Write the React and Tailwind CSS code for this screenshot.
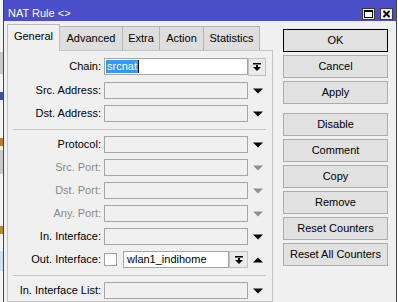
import React from 'react';

const font = { fontFamily: '"Liberation Sans", Arial, sans-serif' };

const Arrow = ({ up = false, gray = false }) => (
  <svg width="10" height="6" viewBox="0 0 10 6" className="ml-[5px] shrink-0">
    <polygon
      points={up ? '0,5.5 10,5.5 5,0.5' : '0,0.5 10,0.5 5,5.5'}
      fill={gray ? '#8f8f8f' : '#000'}
    />
  </svg>
);

const DropIcon = () => (
  <svg width="8" height="8" viewBox="0 0 8 8">
    <rect x="0" y="0" width="8" height="1.5" fill="#000" />
    <rect x="3" y="2" width="2" height="2" fill="#000" />
    <polygon points="0,4 8,4 4,8" fill="#000" />
  </svg>
);

const Label = ({ text, disabled }) => (
  <div
    className={`w-[93px] shrink-0 text-right text-[11px] leading-[13px] ${
      disabled ? 'text-[#8a8a8a]' : 'text-black'
    }`}
  >
    {text}
  </div>
);

const Field = ({ label, disabled = false }) => (
  <div className="flex items-center h-[17px]">
    <Label text={label} disabled={disabled} />
    <div className="ml-[3px] w-[144px] h-[17px] border border-[#a5a5a5] bg-[#f0f0f0]" />
    <Arrow gray={disabled} />
  </div>
);

const Separator = () => <div className="h-px mt-[1px] ml-[5px] mr-[6px] bg-[#c6c6c6]" />;

const Btn = ({ children, primary = false, className = '' }) => (
  <div
    className={`h-[23px] w-[105px] flex items-center justify-center text-[11px] text-black bg-[#e1e1e1] border ${
      primary ? 'border-black' : 'border-[#adadad]'
    } ${className}`}
  >
    {children}
  </div>
);

const tabs = ['Advanced', 'Extra', 'Action', 'Statistics'];
const tabWidths = ['w-[63px]', 'w-[37px]', 'w-[44px]', 'w-[56px]'];

export default function App() {
  return (
    <div className="w-[398px] h-[302px] flex overflow-hidden bg-white" style={font}>
      {/* background window peeking out on the left */}
      <div className="w-[3px] shrink-0 flex flex-col bg-[#f4f4f4]">
        <div className="h-[52px]" />
        <div className="h-[22px] bg-[#c9c9c9]" />
        <div className="h-[18px]" />
        <div className="h-[8px] bg-[#3c4fb0]" />
        <div className="h-[38px]" />
        <div className="h-[8px] bg-[#c0792a]" />
        <div className="h-[4px]" />
        <div className="h-[24px] bg-[#c9c9c9]" />
        <div className="h-[52px]" />
        <div className="h-[8px] bg-[#b68a2b]" />
        <div className="h-[17px]" />
        <div className="h-[20px] bg-[#cfe2f5]" />
      </div>

      {/* window */}
      <div className="w-[394px] shrink-0 flex flex-col border-l border-r border-[#454545] bg-[#f0f0f0]">
        {/* title bar */}
        <div className="h-[21px] shrink-0 flex items-start pt-[7px] pl-[4px] pr-[3px] bg-[#4a4ec8]">
          <div className="text-[11px] leading-[13px] text-white">NAT Rule &lt;&gt;</div>
          <div className="ml-auto flex gap-[5px] mt-[1px]">
            <svg width="13" height="12" viewBox="0 0 13 12">
              <rect x="0.5" y="0.5" width="12" height="11" fill="#ececec" stroke="#3a3a3a" />
              <rect x="2.5" y="2.5" width="8" height="7" fill="#fff" stroke="#000" />
              <rect x="2" y="2" width="9" height="2" fill="#000" />
            </svg>
            <svg width="13" height="12" viewBox="0 0 13 12">
              <rect x="0.5" y="0.5" width="12" height="11" fill="#ececec" stroke="#3a3a3a" />
              <path d="M3.5 3 L9.5 9 M9.5 3 L3.5 9" stroke="#000" strokeWidth="1.8" />
            </svg>
          </div>
        </div>

        {/* body */}
        <div className="flex-1 flex pl-[3px] pr-[8px]">
          {/* tabs + panel */}
          <div className="w-[266px] shrink-0 flex flex-col pt-[3px]">
            <div className="flex items-end h-[26px]">
              <div className="w-[53px] h-[27px] -mb-px relative z-10 flex items-center justify-center pb-[3px] text-[11px] text-black bg-[#f0f0f0] border-l border-t border-r border-[#bcbcbc]">
                General
              </div>
              {tabs.map((t, i) => (
                <div
                  key={t}
                  className={`${tabWidths[i]} h-[24px] flex items-center justify-center text-[11px] text-black bg-[#dedede] border-t border-r border-[#b4b4b4]`}
                >
                  {t}
                </div>
              ))}
            </div>

            <div className="flex-1 flex flex-col gap-[6px] pt-[7px] border border-[#c4c4c4]">
              {/* Chain */}
              <div className="flex items-start h-[18px]">
                <div className="h-[17px] flex items-center">
                  <Label text="Chain:" />
                </div>
                <div className="ml-[3px] w-[144px] h-[17px] flex items-center pl-[1px] border border-[#a5a5a5] bg-white">
                  <span className="h-[13px] px-[1px] text-[11px] leading-[13px] text-white bg-[#3399ff]">srcnat</span>
                  <span className="w-px h-[13px] bg-black" />
                </div>
                <div className="w-[18px] h-[18px] flex items-center justify-center border border-[#c2c2c2] bg-[#ebebeb]">
                  <DropIcon />
                </div>
              </div>
              <Field label="Src. Address:" />
              <Field label="Dst. Address:" />
              <Separator />
              <Field label="Protocol:" />
              <Field label="Src. Port:" disabled />
              <Field label="Dst. Port:" disabled />
              <Field label="Any. Port:" disabled />
              <Field label="In. Interface:" />
              {/* Out interface */}
              <div className="flex items-center h-[17px]">
                <Label text="Out. Interface:" />
                <div className="ml-[3px] w-[13px] h-[13px] border border-[#a0a0a0] bg-white" />
                <div className="ml-[6px] w-[106px] h-[17px] flex items-center pl-[3px] text-[11px] leading-[13px] text-black border border-[#a5a5a5] bg-white">
                  wlan1_indihome
                </div>
                <div className="w-[19px] h-[17px] flex items-center justify-center border border-[#c2c2c2] bg-[#ebebeb]">
                  <DropIcon />
                </div>
                <Arrow up />
              </div>
              <Separator />
              <Field label="In. Interface List:" />
            </div>
          </div>

          {/* buttons */}
          <div className="ml-[10px] flex flex-col gap-[3px] pt-[8px]">
            <Btn primary>OK</Btn>
            <Btn>Cancel</Btn>
            <Btn>Apply</Btn>
            <Btn className="mt-[6px]">Disable</Btn>
            <Btn>Comment</Btn>
            <Btn>Copy</Btn>
            <Btn>Remove</Btn>
            <Btn>Reset Counters</Btn>
            <Btn>Reset All Counters</Btn>
          </div>
        </div>
      </div>

      <div className="w-px shrink-0 bg-white" />
    </div>
  );
}
